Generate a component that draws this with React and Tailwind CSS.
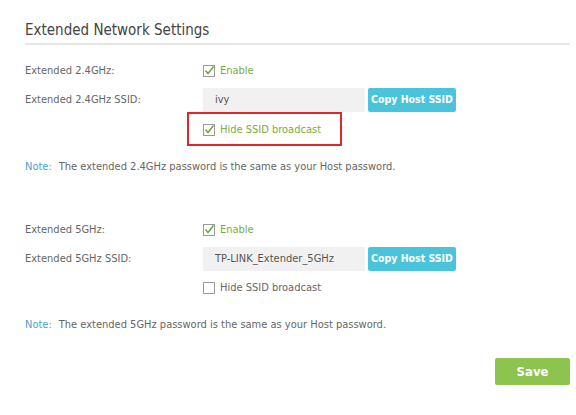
import React from "react";

function Check({ checked }) {
  return (
    <svg width="12" height="12" viewBox="0 0 12 12" className="shrink-0">
      <rect x="0.5" y="0.5" width="11" height="11" fill="#fff" stroke="#9a9a9a" />
      {checked && (
        <path d="M2.5 5.5 L5 8.5 L10.5 1.5" fill="none" stroke="#6ea83a" strokeWidth="1.5" />
      )}
    </svg>
  );
}

function Row({ label, children, className = "" }) {
  return (
    <div className={"flex items-center " + className}>
      <div className="w-[178px] shrink-0 text-[#666]">{label}</div>
      <div className="flex items-center">{children}</div>
    </div>
  );
}

function CheckRow({ checked, text }) {
  return (
    <div className={"flex items-center gap-[5px] " + (checked ? "text-[#78ad3e]" : "text-[#666]")}>
      <Check checked={checked} />
      <span>{text}</span>
    </div>
  );
}

function SsidInput({ value }) {
  return (
    <div className="flex items-center">
      <div className="w-[162px] h-[24px] bg-[#f1f1f1] pl-[12px] flex items-center text-[#555]">{value}</div>
      <div className="ml-[3px] w-[88px] h-[24px] bg-[#49c4db] rounded-[2px] text-white font-bold text-[10.5px] whitespace-nowrap flex items-center justify-center">
        Copy Host SSID
      </div>
    </div>
  );
}

export default function App() {
  return (
    <div
      className="relative w-[576px] h-[415px] bg-white text-[11px] overflow-hidden"
      style={{ fontFamily: "'DejaVu Sans Condensed', 'Liberation Sans', sans-serif" }}
    >
      <div className="pl-[25px] pr-[6px] pt-[19px]">
        <div className="h-[26px] border-b-2 border-[#e6e6e6] text-[15px] leading-[22px] text-[#444]">
          Extended Network Settings
        </div>

        <Row label="Extended 2.4GHz:" className="h-[20px] mt-[16px]">
          <CheckRow checked text="Enable" />
        </Row>
        <Row label="Extended 2.4GHz SSID:" className="h-[24px] mt-[7px]">
          <SsidInput value="ivy" />
        </Row>
        <Row label="" className="h-[20px] mt-[8px]">
          <CheckRow checked text="Hide SSID broadcast" />
        </Row>
        <div className="h-[20px] mt-[17px] flex items-center text-[#666]">
          <span className="text-[#4a9fd5]">Note:</span>
          <span className="ml-[7px]">The extended 2.4GHz password is the same as your Host password.</span>
        </div>

        <Row label="Extended 5GHz:" className="h-[20px] mt-[43px]">
          <CheckRow checked text="Enable" />
        </Row>
        <Row label="Extended 5GHz SSID:" className="h-[24px] mt-[7px]">
          <SsidInput value="TP-LINK_Extender_5GHz" />
        </Row>
        <Row label="" className="h-[20px] mt-[7px]">
          <CheckRow checked={false} text="Hide SSID broadcast" />
        </Row>
        <div className="h-[20px] mt-[17px] flex items-center text-[#666]">
          <span className="text-[#4a9fd5]">Note:</span>
          <span className="ml-[7px]">The extended 5GHz password is the same as your Host password.</span>
        </div>

        <div className="flex justify-end mt-[23px]">
          <div className="w-[75px] h-[27px] bg-[#8cc44f] rounded-[2px] text-white font-bold text-[13px] flex items-center justify-center">
            Save
          </div>
        </div>
      </div>

      <div className="absolute left-[187px] top-[112px] w-[155px] h-[34px] border-2 border-[#e3262b]" />
    </div>
  );
}
